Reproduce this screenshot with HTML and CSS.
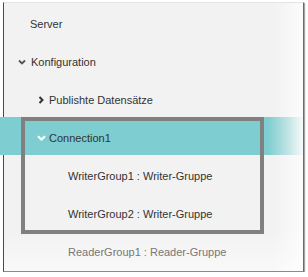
FILE: index.html
```html
<!DOCTYPE html>
<html lang="de">
<head>
    <meta charset="utf-8">
    <title>Baum</title>
    <link rel="stylesheet" href="styles.css">
</head>
<body>
    <div class="panel">
        <ul class="tree">
            <li class="node lvl0"><span class="label">Server</span></li>
            <li class="node lvl0 has-icon">
                <span class="icon">
                    <svg width="8" height="6" viewBox="0 0 8 6"><polyline points="1,1.5 4,4.5 7,1.5" fill="none" stroke="#555" stroke-width="1.8"/></svg>
                </span>
                <span class="label">Konfiguration</span>
            </li>
            <li class="node lvl1 has-icon">
                <span class="icon">
                    <svg width="8" height="8" viewBox="0 0 8 8"><polyline points="2.5,1 5.5,4 2.5,7" fill="none" stroke="#333" stroke-width="2"/></svg>
                </span>
                <span class="label">Publishte Datensätze</span>
            </li>
            <li class="node lvl1 has-icon selected">
                <span class="icon">
                    <svg width="9" height="6" viewBox="0 0 9 6"><polyline points="1,1.2 4.5,4.5 8,1.2" fill="none" stroke="#fff" stroke-width="2.2"/></svg>
                </span>
                <span class="label">Connection1</span>
            </li>
            <li class="node lvl2"><span class="label">WriterGroup1 : Writer-Gruppe</span></li>
            <li class="node lvl2"><span class="label">WriterGroup2 : Writer-Gruppe</span></li>
            <li class="node lvl2 muted"><span class="label">ReaderGroup1 : Reader-Gruppe</span></li>
        </ul>
        <!-- Markierung um Connection1 und die Writer-Gruppen -->
        <div class="mark"></div>
    </div>
</body>
</html>
```

FILE: styles.css
```css
* {
    box-sizing: border-box;
}

body {
    margin: 0;
    background: #fff;
    font-family: "Liberation Sans", Arial, sans-serif;
    font-size: 11px;
}

.panel {
    position: relative;
    margin: 2px 0 0 3px;
    width: 301px;
    height: 270px;
    border-left: 1px solid #4a4a4a;
    border-top: 1px solid #e4e4e4;
    border-right: 1px solid #6a6a6a;
    border-bottom: 1px solid #8a8a8a;
    box-shadow: 1px 1px 1px rgba(0, 0, 0, 0.35);
    background:
        linear-gradient(to right, rgba(255, 255, 255, 0) 90%, rgba(255, 255, 255, 0.75) 100%),
        linear-gradient(to bottom, #f2f2f2 85%, #f9f9f9 100%);
}

.tree {
    list-style-type: none;
    margin: 0;
    padding: 0;
}

.node {
    display: flex;
    align-items: center;
    height: 38px;
    padding-top: 4px;
    color: #333;
}

.lvl0 {
    padding-left: 26px;
}

.lvl0.has-icon {
    padding-left: 14px;
}

.lvl1 {
    padding-left: 33px;
}

.lvl2 {
    padding-left: 64px;
}

.icon {
    display: flex;
    align-items: center;
    width: 13px;
    height: 10px;
}

.lvl1 .icon {
    width: 12px;
}

.selected {
    margin-left: -4px;
    padding-left: 37px;
    margin-right: -1px;
    background: linear-gradient(to right, #7ecdd0 88%, rgba(126, 205, 208, 0) 100%);
}

.muted {
    color: #777;
}

.mark {
    position: absolute;
    left: 17px;
    top: 114px;
    width: 243px;
    height: 117px;
    border: 4px solid #808080;
}
```
